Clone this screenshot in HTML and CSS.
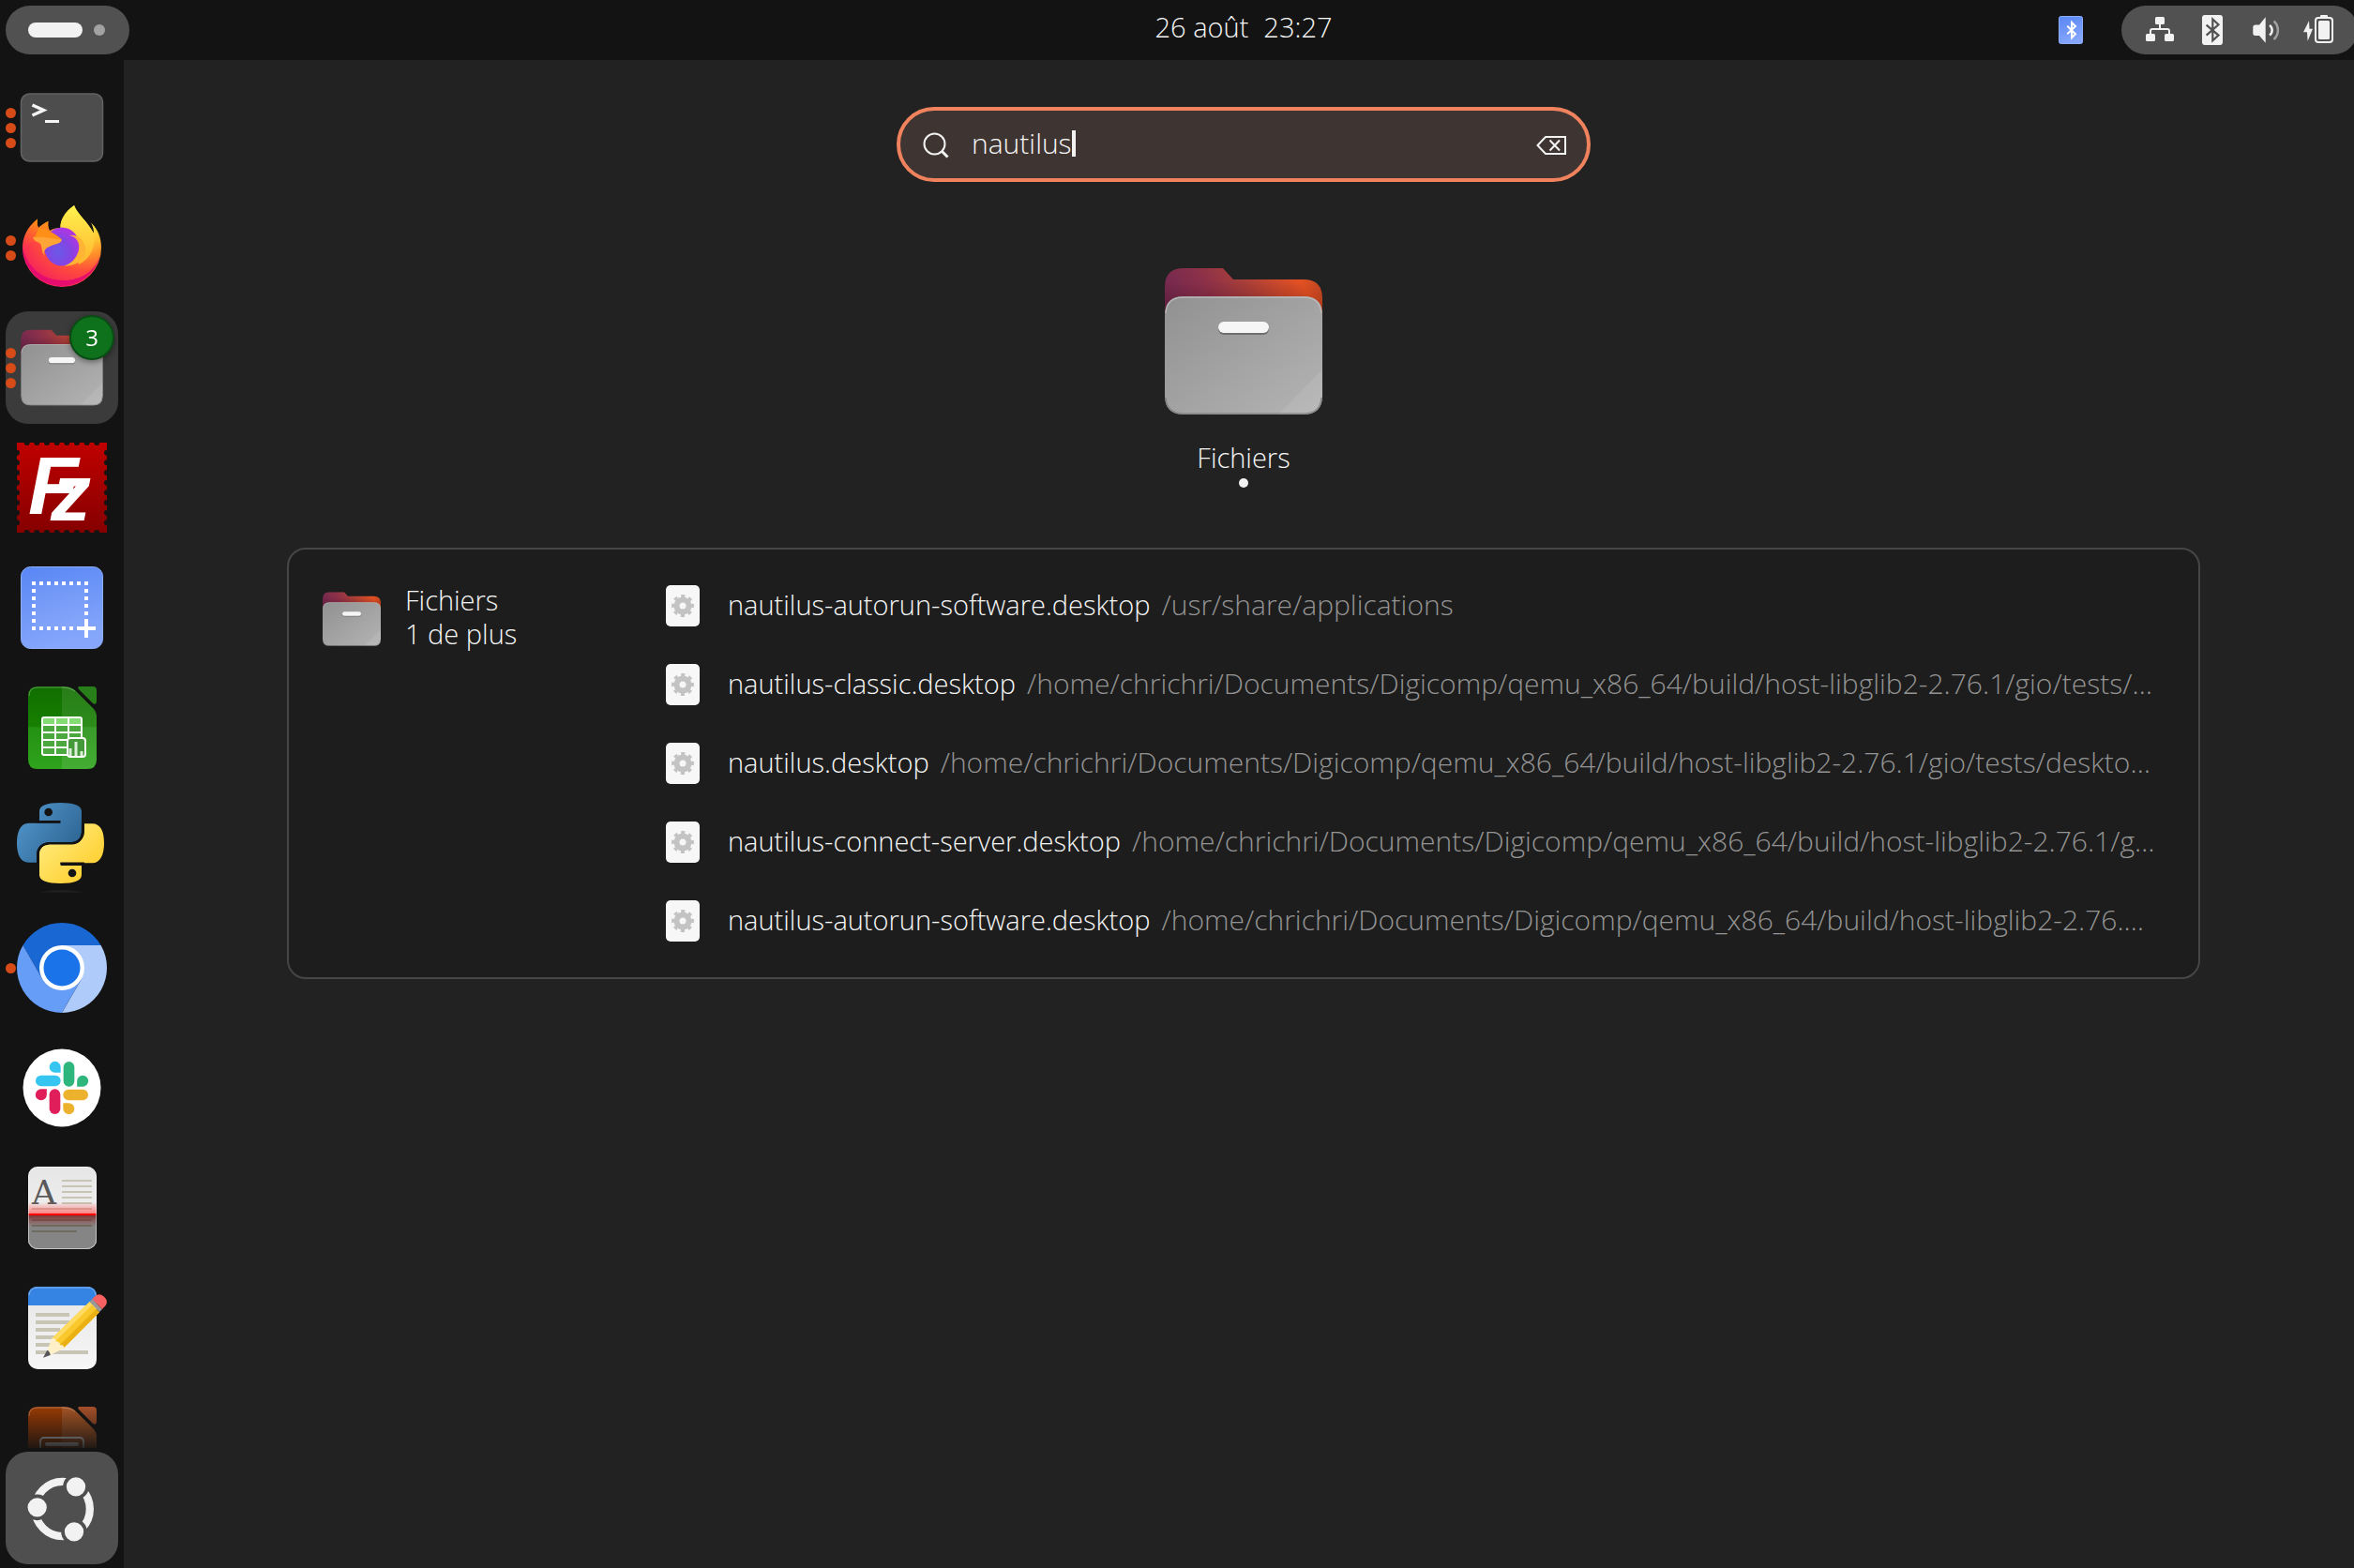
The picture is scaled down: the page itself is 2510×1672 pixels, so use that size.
FILE: index.html
```html
<!DOCTYPE html>
<html lang="fr">
<head>
<meta charset="utf-8">
<meta name="viewport" content="width=device-width, initial-scale=1">
<title>Activités</title>
<link rel="stylesheet" href="styles.css">
</head>
<body>
<svg class="defs" aria-hidden="true">
  <defs>
    <linearGradient id="folder-back" x1="0" y1="0.6" x2="1" y2="0.4">
      <stop offset="0" stop-color="#6f2850"/><stop offset="0.3" stop-color="#8b304a"/><stop offset="0.55" stop-color="#a83e3a"/><stop offset="0.9" stop-color="#e55122"/><stop offset="1" stop-color="#c84a24"/>
    </linearGradient>
    <linearGradient id="folder-shade" x1="0" y1="0" x2="0" y2="1">
      <stop offset="0" stop-color="#300" stop-opacity="0"/><stop offset="1" stop-color="#300" stop-opacity="0.4"/>
    </linearGradient>
    <linearGradient id="folder-front" x1="0" y1="0" x2="1" y2="1">
      <stop offset="0" stop-color="#919191"/><stop offset="1" stop-color="#b4b4b4"/>
    </linearGradient>
    <linearGradient id="page" x1="0" y1="0" x2="0" y2="1">
      <stop offset="0" stop-color="#e6e6e6"/><stop offset="1" stop-color="#f6f6f6"/>
    </linearGradient>
    <linearGradient id="blue" x1="0" y1="0" x2="0.3" y2="1">
      <stop offset="0" stop-color="#5886f4"/><stop offset="1" stop-color="#85a6fb"/>
    </linearGradient>
    <symbol id="folder" viewBox="0 0 168 156">
      <path d="M0 40V20Q0 0 20 0H62L73 12H148Q168 12 168 32V60H0Z" fill="url(#folder-back)"/>
      <path d="M0 40V14H168V60H0Z" fill="url(#folder-shade)"/>
      <path d="M0 50Q0 30 20 30H148Q168 30 168 50V136Q168 156 148 156H20Q0 156 0 136Z" fill="url(#folder-front)"/>
      <path d="M168 108V136Q168 156 148 156H121Z" fill="#fff" fill-opacity="0.08"/>
      <path d="M1 48Q2 31 20 31H148Q166 31 167 48" fill="none" stroke="#c4c4c4" stroke-width="1.5" stroke-opacity="0.7"/>
      <path d="M1 138Q2 155 20 155H148Q166 155 167 138" fill="none" stroke="#777" stroke-width="1.5" stroke-opacity="0.7"/>
      <rect x="57" y="59" width="54" height="12" rx="6" fill="#6f6f6f"/>
      <rect x="57" y="57" width="54" height="12" rx="6" fill="#f6f6f6"/>
    </symbol>
    <symbol id="desktop-file" viewBox="0 0 36 44">
      <rect width="36" height="44" rx="5" fill="#f7f7f7"/>
      <circle cx="18" cy="22" r="6.5" fill="none" stroke="#c3c3c3" stroke-width="6"/>
      <circle cx="18" cy="22" r="10.5" fill="none" stroke="#c3c3c3" stroke-width="3" stroke-dasharray="4.12 4.12" transform="rotate(-11.25 18 22)"/>
    </symbol>
  </defs>
</svg>

<div class="shell">
  <header class="topbar">
    <button class="workspaces" type="button" aria-label="Activités"><span class="workspace-current"></span><span class="workspace-other"></span></button>
    <button class="clock" type="button"><span>26 août</span><span>23:27</span></button>
    <div class="status">
      <button class="tray" type="button" aria-label="Bluetooth">
        <svg width="26" height="30" viewBox="0 0 26 30"><rect x="0.5" y="0.5" width="25" height="29" rx="2" fill="url(#blue)" stroke="#8eaefa"/><path d="M9.3 10.7L18 19.3L14 23.3V7L18 11L9.3 19.3" fill="none" stroke="#fff" stroke-width="2"/></svg>
      </button>
      <button class="system" type="button" aria-label="Système">
        <svg viewBox="0 0 32 32"><g fill="#f2f2f2"><rect x="10" y="2" width="10" height="8" rx="1.5"/><rect x="0" y="20" width="10" height="8" rx="1.5"/><rect x="20" y="20" width="10" height="8" rx="1.5"/></g><path d="M15 9V15M5 21V17Q5 15 7 15H23Q25 15 25 17V21" fill="none" stroke="#f2f2f2" stroke-width="2"/></svg>
        <svg viewBox="0 0 32 32"><rect x="4" y="0" width="22" height="32" rx="3" fill="#f2f2f2"/><path d="M8.6 10.6L21.5 21.6L15.3 27.2V4.5L21.5 10.3L8.6 21.6" fill="none" stroke="#515151" stroke-width="2.2"/></svg>
        <svg viewBox="0 0 32 32"><path d="M2.3 13Q2.3 10.5 5 10.5H9L15.7 2.3V29.7L9 22H5Q2.3 22 2.3 19.5Z" fill="#f2f2f2"/><path d="M20 11A6.500 6.500 0 0 1 20 21.500" fill="none" stroke="#f2f2f2" stroke-width="2.500"/><path d="M24.500 6.500A13 13 0 0 1 24.500 26" fill="none" stroke="#f2f2f2" stroke-opacity="0.5" stroke-width="2.500"/></svg>
        <svg viewBox="0 0 32 32"><path d="M6 6.300L0 18.300H4L4.600 27.700L10 14.700H6.500Z" fill="#f2f2f2"/><rect x="18" y="0" width="8" height="3" rx="1" fill="#f2f2f2"/><rect x="13" y="3" width="18" height="26" rx="3" fill="none" stroke="#f2f2f2" stroke-width="2"/><rect x="16" y="6" width="12" height="20" rx="1.500" fill="#f2f2f2"/></svg>
      </button>
    </div>
  </header>

  <nav class="dock" aria-label="Dock">
    <ul class="apps">
      <li><button class="app" type="button" aria-label="Terminal"><span class="running"><i></i><i></i><i></i></span>
        <svg viewBox="0 0 96 96"><rect x="4.500" y="12" width="87" height="72" rx="9" fill="#4d4d4d" stroke="#636363" stroke-width="1.500"/><path d="M16.500 24L28.500 29.500L16.500 35" fill="none" stroke="#f5f5f5" stroke-width="3.500"/><path d="M30 41.500H45" stroke="#f5f5f5" stroke-width="3"/></svg></button></li>
      <li><button class="app" type="button" aria-label="Firefox"><span class="running"><i></i><i></i></span>
        <svg viewBox="0 0 96 96">
          <defs>
            <radialGradient id="fx" gradientUnits="userSpaceOnUse" cx="74" cy="14" r="82"><stop offset="0.1" stop-color="#fff04c"/><stop offset="0.35" stop-color="#ffc130"/><stop offset="0.52" stop-color="#ff8c2a"/><stop offset="0.72" stop-color="#ff4b3c"/><stop offset="1" stop-color="#f5245c"/></radialGradient>
            <linearGradient id="fxear" x1="0" y1="0" x2="0" y2="1"><stop offset="0" stop-color="#ff980e"/><stop offset="1" stop-color="#ff5a30" stop-opacity="0"/></linearGradient>
            <radialGradient id="fxglobe" cx="0.4" cy="0.65" r="0.7"><stop offset="0" stop-color="#6a5ae8"/><stop offset="0.5" stop-color="#8444e4"/><stop offset="1" stop-color="#b833e1"/></radialGradient>
            <linearGradient id="fxflame" x1="0" y1="0" x2="0" y2="1"><stop offset="0" stop-color="#fff24e"/><stop offset="1" stop-color="#ffb52e"/></linearGradient>
          </defs>
          <path d="M22 17.500C10 27 6 38 6 49A42 41.500 0 0 0 90 48C90 37 86 28 79 21.500C81 25 82 29 82 33C76 21 65 13 61 3C51 10 46 19 46.500 27C42 27 38 28 35 30C33 27 33 23 33.500 20C29 22 26 24 23 27C21.500 24 21.500 21 22 17.500Z" fill="url(#fx)"/>
          <path d="M6 47A42 42 0 0 0 89 56C83 74 68 83 49 83C27 83 10 68 6 47Z" fill="#e30a72" fill-opacity="0.9"/>
          <path d="M22 17.500C10 27 6 38 6 49C16 40 30 36 48 40C44 34 39 31 35 30C33 27 33 23 33.500 20C29 22 26 24 23 27C21.500 24 21.500 21 22 17.500Z" fill="url(#fxear)"/>
          <path d="M46.500 27C46 19 51 10 61 3C65 13 76 21 82 33C84 48 78 60 66 66L60 36Z" fill="url(#fxflame)"/>
          <ellipse cx="48" cy="47" rx="19" ry="20.500" fill="url(#fxglobe)"/>
          <path d="M56 35C66 37 69 47 64 56C61 62 56 66 50 67.500C66 68 75 58 73 47C71 39 64 34 56 35Z" fill="#ffb433"/>
          <path d="M17 37C26 34 38 37 48 39.500C47 44 41 44 37 46C32 48 27 50 30 57C25 52 28 46 24 43C20 42 18 40 17 37Z" fill="#ffa436"/>
          <path d="M24 26C30 29 41 32 48 39.500C38 39 29 36 19 37Z" fill="#ff8f16"/>
        </svg></button></li>
      <li><button class="app app-active" type="button" aria-label="Fichiers"><span class="running"><i></i><i></i><i></i></span>
        <svg viewBox="0 0 96 96"><use href="#folder" x="4" y="7.500" width="88" height="81"/></svg><span class="badge">3</span></button></li>
      <li><button class="app" type="button" aria-label="FileZilla">
        <svg viewBox="0 0 96 96">
          <defs><linearGradient id="fz" x1="0" y1="0" x2="0" y2="1"><stop offset="0" stop-color="#c00000"/><stop offset="1" stop-color="#850000"/></linearGradient></defs>
          <rect width="96" height="96" fill="url(#fz)"/>
          <path d="M10.670 0H86M10.670 96H86M0 10.670V86M96 10.670V86" fill="none" stroke="#131313" stroke-width="6" stroke-linecap="round" stroke-dasharray="0 10.660"/>
          <text class="fz" x="12" y="76" font-size="88">F<tspan x="36" y="83" font-size="86">z</tspan></text>
        </svg></button></li>
      <li><button class="app" type="button" aria-label="Capture d’écran">
        <svg viewBox="0 0 96 96"><rect x="4.500" y="4.500" width="87" height="87" rx="10" fill="url(#blue)" stroke="#8fb0fb"/><rect x="18" y="22" width="56" height="48" fill="#fff" fill-opacity="0.06"/><path d="M16 22H76M16 70H68M18 28V66M74 28V62" fill="none" stroke="#fff" stroke-width="4" stroke-dasharray="4 4"/><path d="M64 70H84M74 60V80" stroke="#fff" stroke-width="4"/></svg></button></li>
      <li><button class="app" type="button" aria-label="LibreOffice Calc">
        <svg viewBox="0 0 96 96">
          <defs><linearGradient id="calc" x1="0" y1="0" x2="0" y2="1"><stop offset="0" stop-color="#106e00"/><stop offset="0.48" stop-color="#178000"/><stop offset="0.500" stop-color="#239012"/><stop offset="1" stop-color="#2fa41c"/></linearGradient></defs>
          <path d="M22 4H50Q58 4 63 9L81 27Q85 31 85 36V82Q85 92 75 92H22Q12 92 12 82V14Q12 4 22 4Z" fill="url(#calc)"/>
          <path d="M48 4H50Q58 4 63 9L81 27Q85 31 85 36V82Q85 92 75 92H48Z" fill="#fff" fill-opacity="0.1"/>
          <path d="M67 4H81Q85 4 85 8V20Q85 24 81 22L66 7Q64 4 67 4Z" fill="#287f1a"/>
          <path d="M13 14Q13 5 22 5H50Q57 5 62 9" fill="none" stroke="#fff" stroke-opacity="0.3"/>
          <rect x="27" y="37" width="42" height="40" rx="2" fill="#4aa83e"/><rect x="27" y="37" width="42" height="8" fill="#85dc74"/>
          <path d="M27 45H69M27 53H69M27 61H69M27 69H69M41 37V77M55 37V77" stroke="#fff" stroke-width="2"/><rect x="27" y="37" width="42" height="40" rx="2" fill="none" stroke="#fff" stroke-width="2"/>
          <rect x="54" y="59" width="19" height="20" rx="3" fill="#43993a" stroke="#fff" stroke-width="2"/><path d="M57 78V70M63 78V63M69 78V73" stroke="#d9efd6" stroke-width="3"/>
        </svg></button></li>
      <li><button class="app" type="button" aria-label="Python">
        <svg viewBox="0 0 96 96">
          <defs>
            <linearGradient id="py-a" gradientUnits="userSpaceOnUse" x1="60" y1="40" x2="230" y2="160"><stop offset="0" stop-color="#5295ca"/><stop offset="1" stop-color="#306998"/></linearGradient>
            <linearGradient id="py-b" gradientUnits="userSpaceOnUse" x1="120" y1="20" x2="240" y2="150"><stop offset="0" stop-color="#ffcf30"/><stop offset="1" stop-color="#ffe873"/></linearGradient>
          </defs>
          <g transform="translate(-18 -6) scale(0.33333)">
            <path fill="url(#py-a)" d="M193 18C150 18 126 27 126 45V75H193V83H92C66 83 54 110 54 147C54 185 66 209 92 209H117V183C117 160 137 144 158 144H229C247 144 261 130 261 112V45C261 27 236 18 193 18Z"/>
            <path fill="url(#py-b)" transform="rotate(180 193.500 147)" d="M193 18C150 18 126 27 126 45V75H193V83H92C66 83 54 110 54 147C54 185 66 209 92 209H117V183C117 160 137 144 158 144H229C247 144 261 130 261 112V45C261 27 236 18 193 18Z"/>
            <circle cx="155" cy="48" r="13" fill="#131313"/><circle cx="231" cy="243" r="13" fill="#131313"/>
            <path d="M193 79H117M193 212H270" stroke="#131313" stroke-width="7"/>
            <path d="M264 83V112Q261 146 229 148H158Q122 150 121 183V209" fill="none" stroke="#131313" stroke-width="7"/>
            <path d="M125 305Q195 288 268 305Z" fill="#1f1f1f"/>
          </g>
        </svg></button></li>
      <li><button class="app" type="button" aria-label="Chromium"><span class="running"><i></i></span>
        <svg viewBox="0 0 96 96"><path d="M6.430 24A48 48 0 0 1 89.570 24H48V48L27.200 60Z" fill="#1967d2"/><path d="M89.570 24A48 48 0 0 1 48 96L68.800 60L48 48V24Z" fill="#aecbfa"/><path d="M48 96A48 48 0 0 1 6.430 24L27.200 60L48 48L68.800 60Z" fill="#669df6"/><circle cx="48" cy="48" r="24" fill="#fff"/><circle cx="48" cy="48" r="19.500" fill="#1a73e8"/></svg></button></li>
      <li><button class="app" type="button" aria-label="Slack">
        <svg viewBox="0 0 96 96">
          <circle cx="48" cy="48" r="41.500" fill="#fff"/>
          <g transform="translate(-18 -12) scale(0.33333)">
            <g fill="#36c5f0"><path id="slack-drop" d="M194 114V131.500H176A18 18 0 1 1 194 114Z"/><rect id="slack-bar" x="114" y="140" width="80" height="35" rx="17.500"/></g>
            <g fill="#2eb67d" transform="rotate(90 198 180)"><use href="#slack-drop"/><use href="#slack-bar"/></g>
            <g fill="#ecb22e" transform="rotate(180 198 180)"><use href="#slack-drop"/><use href="#slack-bar"/></g>
            <g fill="#e01e5a" transform="rotate(270 198 180)"><use href="#slack-drop"/><use href="#slack-bar"/></g>
          </g>
        </svg></button></li>
      <li><button class="app" type="button" aria-label="Numériseur de documents">
        <svg viewBox="0 0 96 96">
          <defs>
            <clipPath id="scan-clip"><rect x="12" y="4" width="73" height="88" rx="10"/></clipPath>
            <linearGradient id="glow-a" x1="0" y1="0" x2="0" y2="1"><stop offset="0" stop-color="#f44" stop-opacity="0"/><stop offset="1" stop-color="#f55" stop-opacity="0.700"/></linearGradient>
            <linearGradient id="glow-b" x1="0" y1="0" x2="0" y2="1"><stop offset="0" stop-color="#711" stop-opacity="0.700"/><stop offset="1" stop-color="#a33" stop-opacity="0"/></linearGradient>
          </defs>
          <g clip-path="url(#scan-clip)">
            <rect x="12" y="4" width="73" height="88" fill="url(#page)"/>
            <rect x="12" y="56" width="73" height="36" fill="#858585"/>
            <path d="M48 19H80M48 25H80M48 31H80M48 37H80M48 43H80M16 49H80" stroke="#c8c4b6" stroke-width="2"/>
            <path d="M16 61H80M16 67H80M16 73H64" stroke="#6e6b60" stroke-width="2"/>
            <text class="scan-letter" x="16" y="44" font-size="36">A</text>
            <rect x="12" y="42" width="73" height="12" fill="url(#glow-a)"/><rect x="12" y="56" width="73" height="12" fill="url(#glow-b)"/>
            <rect x="12" y="54" width="73" height="2" fill="#f00"/>
          </g>
          <rect x="12.500" y="4.500" width="72" height="87" rx="9.500" fill="none" stroke="#fff" stroke-opacity="0.5"/>
        </svg></button></li>
      <li><button class="app" type="button" aria-label="Éditeur de texte">
        <svg viewBox="0 0 96 96">
          <rect x="12" y="4" width="73" height="88" rx="10" fill="url(#page)"/>
          <path d="M12 24V14Q12 4 22 4H75Q85 4 85 14V24Z" fill="#3584e4"/><path d="M13 13Q14 5 22 5H75Q83 5 84 13" fill="none" stroke="#7fb2f0"/>
          <path d="M20 34H56M20 42H56M20 50H46M20 58H40M20 66H36M20 74H76" stroke="#c8c4b6" stroke-width="4"/>
          <g transform="translate(-18 -18) scale(0.33333)">
            <path d="M167 230L287 114L318 148L203 263Z" fill="#f8c82c"/><path d="M167 230L287 114L296 124L178 240Z" fill="#ffdb62"/><path d="M192 252L308 137L318 148L203 263Z" fill="#ebb113"/>
            <path d="M167 230L151 270L163 284L206 262Q203 250 192 253Q190 240 179 242Q178 230 167 230Z" fill="#fff0c8"/>
            <path d="M151 269L138 293L161 285Q160 273 151 269Z" fill="#55555a"/>
            <path d="M287 114L295 106L327 138L318 147Z" fill="#9a9996"/><path d="M295 106L305 95Q318 85 331 97L337 103Q346 114 338 126L327 138Z" fill="#f66161"/>
          </g>
        </svg></button></li>
      <li><button class="app" type="button" aria-label="LibreOffice Impress">
        <svg viewBox="0 0 96 96">
          <path d="M22 4H50Q58 4 63 9L81 27Q85 31 85 36V82Q85 92 75 92H22Q12 92 12 82V14Q12 4 22 4Z" fill="#a33e03"/>
          <path d="M48 4H50Q58 4 63 9L81 27Q85 31 85 36V82Q85 92 75 92H48Z" fill="#fff" fill-opacity="0.14"/>
          <path d="M67 4H81Q85 4 85 8V20Q85 24 81 22L66 7Q64 4 67 4Z" fill="#b0542a"/>
          <path d="M13 14Q13 5 22 5H50Q57 5 62 9" fill="none" stroke="#fff" stroke-opacity="0.3"/>
          <rect x="25" y="37" width="46" height="36" rx="4" fill="none" stroke="#fff" stroke-width="2"/><rect x="30" y="42" width="36" height="4" rx="2" fill="#fff"/>
        </svg></button></li>
    </ul>
    <button class="launcher" type="button" aria-label="Afficher les applications">
      <svg viewBox="18 594 360 360"><circle cx="200" cy="777" r="87.500" fill="none" stroke="#f2f2f2" stroke-width="25"/><g fill="#f2f2f2" stroke="#4f4f4f" stroke-width="11"><circle cx="243" cy="706" r="36"/><circle cx="119" cy="772" r="36"/><circle cx="237" cy="850" r="36"/></g></svg>
    </button>
  </nav>

  <main class="overview">
    <form class="search" role="search">
      <svg class="search-icon" viewBox="0 0 28 28"><circle cx="12.500" cy="12.500" r="11" fill="none" stroke="#f2f2f2" stroke-width="2"/><path d="M20 20L26.500 26.500" stroke="#f2f2f2" stroke-width="3"/></svg>
      <label class="query"><input type="text" value="nautilus" aria-label="Rechercher" size="8"><span class="caret"></span></label>
      <button class="clear" type="button" aria-label="Effacer"><svg viewBox="0 0 32 24"><path d="M1.500 12L10 3H31V21H10Z" fill="none" stroke="#f2f2f2" stroke-width="2"/><path d="M14.500 6.500L25 17.500M25 6.500L14.500 17.500" stroke="#f2f2f2" stroke-width="2"/></svg></button>
    </form>

    <button class="app-result" type="button">
      <svg class="app-result-icon" viewBox="0 0 168 156"><use href="#folder"/></svg>
      <span>Fichiers</span>
      <span class="app-result-dot"></span>
    </button>

    <section class="panel">
      <button class="provider" type="button">
        <svg class="provider-icon" viewBox="0 0 168 156"><use href="#folder"/></svg>
        <span class="provider-text"><span>Fichiers</span><span>1 de plus</span></span>
      </button>
      <ul class="results">
        <li><a class="result" href="#"><svg viewBox="0 0 36 44"><use href="#desktop-file"/></svg><span class="name">nautilus-autorun-software.desktop</span><span class="path">/usr/share/applications</span></a></li>
        <li><a class="result" href="#"><svg viewBox="0 0 36 44"><use href="#desktop-file"/></svg><span class="name">nautilus-classic.desktop</span><span class="path">/home/chrichri/Documents/Digicomp/qemu_x86_64/build/host-libglib2-2.76.1/gio/tests/…</span></a></li>
        <li><a class="result" href="#"><svg viewBox="0 0 36 44"><use href="#desktop-file"/></svg><span class="name">nautilus.desktop</span><span class="path">/home/chrichri/Documents/Digicomp/qemu_x86_64/build/host-libglib2-2.76.1/gio/tests/deskto…</span></a></li>
        <li><a class="result" href="#"><svg viewBox="0 0 36 44"><use href="#desktop-file"/></svg><span class="name">nautilus-connect-server.desktop</span><span class="path">/home/chrichri/Documents/Digicomp/qemu_x86_64/build/host-libglib2-2.76.1/g…</span></a></li>
        <li><a class="result" href="#"><svg viewBox="0 0 36 44"><use href="#desktop-file"/></svg><span class="name">nautilus-autorun-software.desktop</span><span class="path">/home/chrichri/Documents/Digicomp/qemu_x86_64/build/host-libglib2-2.76.…</span></a></li>
      </ul>
    </section>
  </main>
</div>
</body>
</html>
```
FILE: styles.css
```css
* {
  box-sizing: border-box;
}

html,
body {
  height: 100%;
  margin: 0;
}

body {
  overflow: hidden;
  background: #222;
  color: #f6f6f6;
  font: 300 29px/36px "Open Sans", "Noto Sans", sans-serif;
}

button,
input {
  margin: 0;
  padding: 0;
  border: 0;
  background: none;
  color: inherit;
  font: inherit;
}

ul {
  margin: 0;
  padding: 0;
  list-style: none;
}

svg {
  display: block;
  flex: none;
}

.defs {
  position: absolute;
  width: 0;
  height: 0;
}

/* The desktop runs slightly past the right edge of the window. */
.shell {
  display: grid;
  grid-template: 64px minmax(0, 1fr) / 132px minmax(0, 1fr);
  width: calc(100% + 10px);
  height: 100%;
}

/* Top bar */
.topbar {
  grid-column: 1 / -1;
  display: grid;
  grid-template-columns: 132px 1fr auto 1fr;
  align-items: center;
  background: #131313;
}

.workspaces {
  display: flex;
  align-items: center;
  gap: 12px;
  width: 132px;
  height: 52px;
  margin-left: 6px;
  padding: 0 24px;
  border-radius: 26px;
  background: #515151;
}

.workspace-current {
  width: 58px;
  height: 16px;
  border-radius: 8px;
  background: #f2f2f2;
}

.workspace-other {
  width: 12px;
  height: 12px;
  border-radius: 6px;
  background: #a2a2a2;
}

.clock {
  grid-column: 3;
  display: flex;
  gap: 16px;
  padding-bottom: 6px;
}

.status {
  display: flex;
  align-items: center;
  justify-content: flex-end;
  gap: 41px;
  padding-right: 6px;
}

.system {
  display: flex;
  align-items: center;
  gap: 24px;
  height: 52px;
  padding: 0 26px;
  border-radius: 26px;
  background: #515151;
}

.system svg {
  width: 32px;
  height: 32px;
}

/* Dock */
.dock {
  display: flex;
  flex-direction: column;
  gap: 4px;
  min-height: 0;
  padding: 12px 6px 4px;
  background: #131313;
}

.apps {
  display: flex;
  flex: 1;
  flex-direction: column;
  gap: 8px;
  min-height: 0;
  overflow: hidden;
  mask-image: linear-gradient(#000 calc(100% - 48px), rgba(0, 0, 0, 0.1));
}

.app,
.launcher {
  position: relative;
  display: grid;
  flex: none;
  place-items: center;
  width: 120px;
  height: 120px;
  border-radius: 24px;
}

.app svg {
  width: 96px;
  height: 96px;
  overflow: visible;
}

.app-active {
  background: #3b3b3b;
}

.launcher {
  background: #4f4f4f;
}

.launcher svg {
  width: 120px;
  height: 120px;
}

.running {
  position: absolute;
  left: 0;
  display: grid;
  gap: 5px;
}

.running i {
  width: 11px;
  height: 11px;
  border-radius: 50%;
  background: #d64b17;
}

.badge {
  position: absolute;
  top: 4px;
  right: 4px;
  width: 48px;
  height: 48px;
  border: 2px solid #0a4d14;
  border-radius: 50%;
  background: #0e711c;
  box-shadow: 0 2px 6px rgba(0, 0, 0, 0.4);
  color: #fff;
  font-size: 24px;
  font-weight: 400;
  line-height: 44px;
  text-align: center;
}

.fz {
  fill: #fff;
  font-family: "Liberation Sans", sans-serif;
  font-style: italic;
  font-weight: 700;
}

.scan-letter {
  fill: #5a5a5a;
  font-family: "DejaVu Serif", serif;
  font-weight: 400;
}

/* Overview */
.overview {
  display: flex;
  flex-direction: column;
  align-items: center;
  min-width: 0;
  padding: 50px 174px;
}

.search {
  display: flex;
  align-items: center;
  width: 740px;
  max-width: 100%;
  height: 80px;
  padding: 2px 22px 0 24px;
  border: 4px solid #f0835e;
  border-radius: 40px;
  background: #3e3432;
}

.search-icon {
  width: 28px;
  height: 28px;
}

.query {
  display: flex;
  flex: 1;
  align-items: center;
  padding: 0 24px 4px;
  font-size: 30px;
}

.query input {
  field-sizing: content;
  outline: none;
}

.caret {
  width: 4px;
  height: 28px;
  background: #f2f2f2;
}

.clear svg {
  width: 32px;
  height: 24px;
}

.app-result {
  display: flex;
  flex-direction: column;
  align-items: center;
  margin-top: 92px;
}

.app-result-icon {
  width: 168px;
  height: 156px;
  margin-bottom: 28px;
}

.app-result-dot {
  width: 10px;
  height: 10px;
  margin-top: 4px;
  border-radius: 5px;
  background: #f2f2f2;
}

.panel {
  display: grid;
  grid-template-columns: 366px minmax(0, 1fr);
  align-items: start;
  width: 100%;
  margin-top: 64px;
  padding: 18px 32px 18px 36px;
  border: 2px solid #464646;
  border-radius: 20px;
  background: #1d1d1d;
}

.provider {
  display: flex;
  align-items: center;
  gap: 26px;
  margin-top: 18px;
  text-align: left;
}

.provider-icon {
  width: 62px;
  height: 58px;
}

.provider-text {
  display: grid;
  padding-bottom: 4px;
}

.result {
  display: flex;
  align-items: center;
  height: 84px;
  color: inherit;
  text-decoration: none;
  white-space: nowrap;
}

.result svg {
  width: 36px;
  height: 44px;
  margin-right: 30px;
}

.name,
.path {
  padding-bottom: 2px;
}

.name {
  margin-right: 12px;
  font-weight: 350;
}

.path {
  color: #949494;
  font-size: 30px;
}
```
